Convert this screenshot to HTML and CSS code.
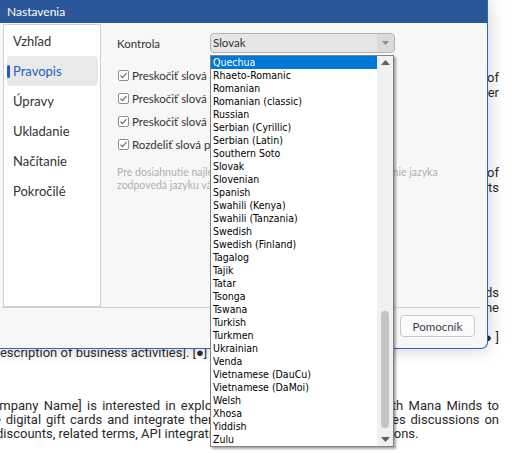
FILE: index.html
```html
<!DOCTYPE html>
<html lang="sk">
<head>
  <meta charset="UTF-8">
  <meta name="viewport" content="width=device-width, initial-scale=1.0">
  <title>Nastavenia</title>
  <link rel="stylesheet" href="styles.css">
</head>
<body>
  <!-- document behind the dialog -->
  <div class="doc">
    <p class="p1">
      <span class="ln">This letter of intent sets out the principal terms for a joint evaluation of</span>
      <span class="ln">a digital gift card programme between the parties, together with any other</span>
      <span class="end">supporting services agreed in writing.</span>
    </p>
    <p class="p2">
      <span class="ln">The parties intend to cooperate on the integration and marketing of</span>
      <span class="ln">the gift card catalogue, including the settlement of all related accounts</span>
      <span class="end">and the monthly reporting.</span>
    </p>
    <p class="p3">
      <span class="ln">Each party shall bear its own costs under all applicable standards</span>
      <span class="ln flush">and shall comply with any guidance on privacy and data use issued by the</span>
      <span class="end">authorities of the relevant markets.</span>
    </p>
    <p class="p4">
      <span class="ln">The scope of the proposed cooperation is described in the attached schedule. [●]</span>
      <span class="end indent-a">[Description of business activities]. [●]</span>
    </p>
    <p class="p5">
      <span class="ln">[Company Name] is interested in exploring a strategic partnership with Mana Minds to</span>
      <span class="ln">use digital gift cards and integrate them into its platform. This includes discussions on</span>
      <span class="end indent-d">discounts, related terms, API integration, and the technical specifications.</span>
    </p>
  </div>

  <div class="dialog">
    <div class="titlebar">Nastavenia</div>

    <div class="dlg-body">
      <ul class="sidebar">
        <li>Vzhľad</li>
        <li class="active">Pravopis</li>
        <li>Úpravy</li>
        <li>Ukladanie</li>
        <li>Načítanie</li>
        <li>Pokročilé</li>
      </ul>

      <div class="panel">
        <div class="field">
          <span class="field-label">Kontrola</span>
          <div class="combo">
            <span class="combo-value">Slovak</span>
            <span class="combo-btn">
              <svg width="7" height="4" viewBox="0 0 7 4"><path d="M0 0h7L3.5 4z" fill="#8a8a8a"/></svg>
            </span>
          </div>
        </div>

        <div class="checks">
          <label class="check">
            <span class="box"><svg width="9" height="9" viewBox="0 0 9 9"><path d="M1.5 4.6l2 2 4-4.4" fill="none" stroke="#6b6b6b" stroke-width="1.2"/></svg></span>
            Preskočiť slová písané VEĽKÝMI
          </label>
          <label class="check">
            <span class="box"><svg width="9" height="9" viewBox="0 0 9 9"><path d="M1.5 4.6l2 2 4-4.4" fill="none" stroke="#6b6b6b" stroke-width="1.2"/></svg></span>
            Preskočiť slová s číslami
          </label>
          <label class="check">
            <span class="box"><svg width="9" height="9" viewBox="0 0 9 9"><path d="M1.5 4.6l2 2 4-4.4" fill="none" stroke="#6b6b6b" stroke-width="1.2"/></svg></span>
            Preskočiť slová bez diakritiky
          </label>
          <label class="check">
            <span class="box"><svg width="9" height="9" viewBox="0 0 9 9"><path d="M1.5 4.6l2 2 4-4.4" fill="none" stroke="#6b6b6b" stroke-width="1.2"/></svg></span>
            Rozdeliť slová pri spojovníkoch
          </label>
        </div>

        <p class="hint">Pre dosiahnutie najlepších výsledkov skontrolujte, či nastavenie jazyka<br>zodpovedá jazyku vášho dokumentu.</p>
      </div>
    </div>

    <div class="dlg-footer">
      <button class="btn">Pomocník</button>
    </div>

    <!-- open language list of the combo box -->
    <div class="dropdown">
      <ul class="options">
        <li class="sel">Quechua</li>
        <li>Rhaeto-Romanic</li>
        <li>Romanian</li>
        <li>Romanian (classic)</li>
        <li>Russian</li>
        <li>Serbian (Cyrillic)</li>
        <li>Serbian (Latin)</li>
        <li>Southern Soto</li>
        <li>Slovak</li>
        <li>Slovenian</li>
        <li>Spanish</li>
        <li>Swahili (Kenya)</li>
        <li>Swahili (Tanzania)</li>
        <li>Swedish</li>
        <li>Swedish (Finland)</li>
        <li>Tagalog</li>
        <li>Tajik</li>
        <li>Tatar</li>
        <li>Tsonga</li>
        <li>Tswana</li>
        <li>Turkish</li>
        <li>Turkmen</li>
        <li>Ukrainian</li>
        <li>Venda</li>
        <li>Vietnamese (DauCu)</li>
        <li>Vietnamese (DaMoi)</li>
        <li>Welsh</li>
        <li>Xhosa</li>
        <li>Yiddish</li>
        <li>Zulu</li>
      </ul>
      <div class="scrollbar">
        <span class="sb-btn"><svg width="9" height="5" viewBox="0 0 9 5"><path d="M0 5h9L4.5 0z" fill="#606060"/></svg></span>
        <div class="sb-track"><span class="sb-thumb"></span></div>
        <span class="sb-btn"><svg width="9" height="5" viewBox="0 0 9 5"><path d="M0 0h9L4.5 5z" fill="#606060"/></svg></span>
      </div>
    </div>
  </div>
</body>
</html>
```

FILE: styles.css
```css
html, body {
  margin: 0;
  height: 100%;
}

body {
  position: relative;
  overflow: hidden;
  background-color: #ffffff;
  font-family: Lato, "Noto Sans", sans-serif;
}

/* document page */
.doc {
  width: 519px;
  margin-left: -20px;
  padding-top: 70px;
  font-family: Roboto, "Liberation Sans", sans-serif;
  font-size: 13px;
  line-height: 15px;
  color: #2a2a2a;
}

.doc p {
  margin: 0;
}

.doc .ln {
  display: block;
  text-align: justify;
  text-align-last: justify;
}

.doc .ln.flush {
  text-align: right;
  text-align-last: right;
}

.doc .end {
  display: block;
}

.p2 { padding-top: 50px; }
.p3 { padding-top: 75px; }
.doc .p5 { padding-top: 39px; line-height: 14px; }

.indent-a { padding-left: 8px; }
.indent-d { padding-left: 16px; }

/* dialog */
.dialog {
  position: absolute;
  left: 0;
  top: 0;
  width: 487px;
  height: 348px;
  display: flex;
  flex-direction: column;
  background-color: #f7f7f7;
  border-right: 1px solid #2a64c5;
  border-bottom: 1px solid #2a64c5;
  border-bottom-right-radius: 7px;
  box-shadow: 0 0 18px rgba(0, 0, 0, 0.2);
  color: #333333;
}

.titlebar {
  height: 23px;
  line-height: 23px;
  padding-left: 7px;
  background-color: #2b579a;
  color: #ffffff;
  font-size: 12px;
}

.dlg-body {
  display: flex;
  height: 284px;
  box-sizing: border-box;
  padding: 1px 0 0 3px;
}

.sidebar {
  list-style: none;
  margin: 0;
  width: 98px;
  height: 283px;
  box-sizing: border-box;
  padding: 1px 2px 0 3px;
  background-color: #ffffff;
  border: 1px solid #d0d0d0;
}

.sidebar li {
  position: relative;
  height: 30px;
  line-height: 30px;
  padding-left: 6px;
  font-size: 13px;
  border-radius: 4px;
}

.sidebar li.active {
  background-color: #e9e9e9;
  color: #1f5ec4;
}

.sidebar li.active::before {
  content: "";
  position: absolute;
  left: 0;
  top: 9px;
  width: 3px;
  height: 13px;
  border-radius: 2px;
  background-color: #1f5ec4;
}

.panel {
  flex: 1;
  padding: 9px 0 0 16px;
}

.field {
  display: flex;
  align-items: center;
  height: 20px;
}

.field-label {
  width: 93px;
  font-size: 11.5px;
}

.combo {
  display: flex;
  width: 185px;
  height: 20px;
  box-sizing: border-box;
  border: 1px solid #b2b2b2;
  border-radius: 4px;
  background-color: #e6e6e6;
  overflow: hidden;
}

.combo-value {
  flex: 1;
  padding-left: 2px;
  font-size: 11.5px;
  line-height: 18px;
}

.combo-btn {
  width: 17px;
  display: flex;
  align-items: center;
  justify-content: center;
  background-color: #dadada;
}

.checks {
  margin-top: 11px;
}

.check {
  display: flex;
  align-items: center;
  height: 23px;
  font-size: 11.5px;
  white-space: nowrap;
}

.box {
  display: flex;
  align-items: center;
  justify-content: center;
  width: 11px;
  height: 11px;
  box-sizing: border-box;
  margin: 0 3px 0 1px;
  border: 1px solid #8f8f8f;
  border-radius: 2px;
  background-color: #ffffff;
}

.hint {
  margin: 10px 0 0;
  font-size: 10.5px;
  line-height: 13px;
  color: #b0b0b0;
  white-space: nowrap;
}

.dlg-footer {
  flex: 1;
  display: flex;
  justify-content: flex-end;
  align-items: flex-start;
  margin: 0 7px 0 2px;
  padding: 7px 5px 0 0;
  border-top: 1px solid #d0d0d0;
}

.btn {
  width: 75px;
  height: 22px;
  padding: 0;
  border: 1px solid #c8c8c8;
  border-radius: 4px;
  background-color: #fbfbfb;
  color: #3a3f4b;
  font-family: Lato, "Noto Sans", sans-serif;
  font-size: 11.5px;
}

/* open list of the combo box */
.dropdown {
  position: absolute;
  left: 210px;
  top: 55px;
  width: 184px;
  height: 392px;
  box-sizing: border-box;
  display: flex;
  background-color: #ffffff;
  border: 1px solid #828282;
  box-shadow: 2px 2px 2px rgba(0, 0, 0, 0.35);
}

.options {
  list-style: none;
  margin: 0;
  padding: 0;
  width: 166px;
  font-family: "DejaVu Sans Condensed", "DejaVu Sans", sans-serif;
  font-stretch: condensed;
  font-size: 10.5px;
  color: #000000;
}

.options li {
  height: 13px;
  line-height: 13px;
  padding-left: 2px;
  white-space: nowrap;
}

.options li.sel {
  background-color: #0078d7;
  color: #ffffff;
}

.scrollbar {
  flex: 1;
  display: flex;
  flex-direction: column;
  background-color: #f0f0f0;
}

.sb-btn {
  height: 13px;
  display: flex;
  align-items: center;
  justify-content: center;
}

.sb-track {
  flex: 1;
  display: flex;
  flex-direction: column;
  justify-content: flex-end;
  align-items: center;
  padding-bottom: 5px;
}

.sb-thumb {
  width: 8px;
  height: 117px;
  border-radius: 4px;
  background-color: #c4c4c4;
}
```
